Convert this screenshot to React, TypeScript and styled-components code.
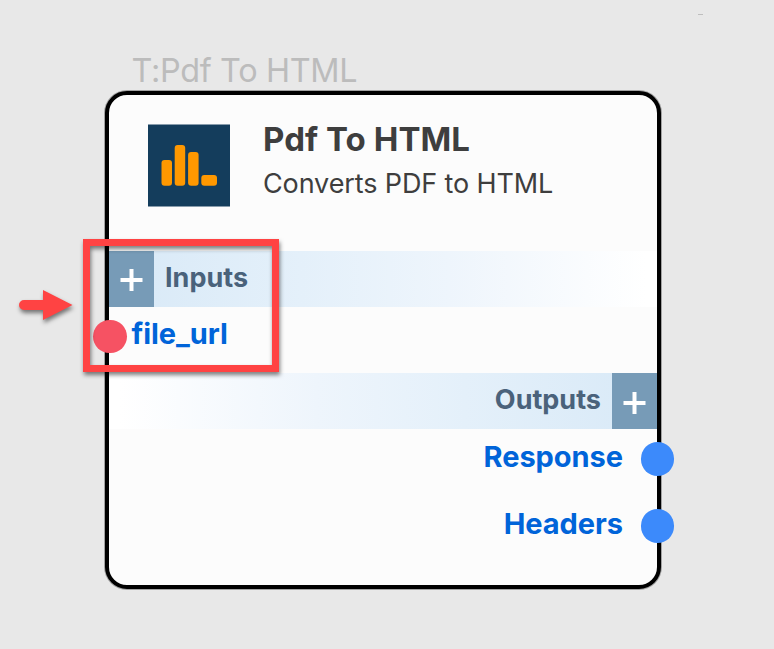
import React from "react";
import styled, { createGlobalStyle } from "styled-components";

const GlobalStyle = createGlobalStyle`
  * { box-sizing: border-box; }
  body { margin: 0; background: #e8e8e8; font-family: Inter, sans-serif; }
`;

const Canvas = styled.main`
  position: relative;
  width: 774px;
  height: 649px;
  padding: 51px 0 0 105px;
  overflow: hidden;
  background: #e8e8e8;
`;

const NodeLabel = styled.div`
  height: 40px;
  padding-left: 26.5px;
  font-size: 32.4px;
  letter-spacing: -0.33px;
  line-height: 40px;
  color: #bcbcbc;
  white-space: nowrap;
`;

const Card = styled.section`
  width: 556px;
  height: 498px;
  border: 4px solid #000;
  border-radius: 22px;
  background: #fcfcfc;
  box-shadow: 0 0 0 1px rgba(0, 0, 0, 0.3);
`;

const Header = styled.header`
  display: flex;
  height: 156px;
  padding: 29px 0 0 39px;
`;

const Icon = styled.svg`
  flex: none;
  width: 82px;
  height: 83px;
`;

const Heading = styled.div`
  margin-left: 33px;
  white-space: nowrap;
  color: #3e3e3e;
`;

const Title = styled.h1`
  margin: -5px 0 0;
  font-size: 33px;
  letter-spacing: 0.05px;
  line-height: 40px;
  font-weight: 700;
`;

const Subtitle = styled.p`
  margin: 8px 0 0;
  font-size: 27px;
  letter-spacing: -0.12px;
  line-height: 34px;
`;

const Band = styled.div<{ $side: "left" | "right" }>`
  display: flex;
  flex-direction: ${(p) => (p.$side === "left" ? "row" : "row-reverse")};
  height: 56px;
  background: linear-gradient(
    to ${(p) => (p.$side === "left" ? "right" : "left")},
    #d8e9f7,
    #e4f0fa 35%,
    #eef5fc 62%,
    #fff 98%
  );
`;

const AddButton = styled.button<{ $drop: number }>`
  display: flex;
  align-items: center;
  justify-content: center;
  width: 45px;
  height: 56px;
  padding: ${(p) => p.$drop}px 0 0;
  border: 0;
  background: #779bb7;
`;

const BandTitle = styled.span`
  padding: 0 11px;
  font-size: 27px;
  line-height: 54px;
  font-weight: 700;
  color: #4a627b;
`;

const Port = styled.div<{ $side: "left" | "right" }>`
  position: relative;
  height: 67px;
  padding: ${(p) => (p.$side === "left" ? "0 0 0 22.5px" : "0 34px 0 0")};
  text-align: ${(p) => p.$side};
  font-size: 29px;
  letter-spacing: -0.05px;
  line-height: ${(p) => (p.$side === "left" ? "54px" : "56px")};
  font-weight: 700;
  color: #0064d9;
`;

const InputPorts = styled.div`
  height: 66.4px;
`;

const Dot = styled.i<{ $side: "left" | "right" }>`
  position: absolute;
  top: 12.7px;
  ${(p) => (p.$side === "left" ? "left: -16px" : "right: -17.2px")};
  width: 33.6px;
  height: 33.6px;
  border-radius: 50%;
  background: ${(p) => (p.$side === "left" ? "#f65263" : "#3c8afb")};
`;

const Highlight = styled.div`
  position: absolute;
  left: 83px;
  top: 239px;
  width: 196px;
  height: 133px;
  border: 7px solid #ff4343;
  filter: drop-shadow(1px 3px 2px rgba(0, 0, 0, 0.5));
`;

const Arrow = styled.svg`
  position: absolute;
  left: 14px;
  top: 284px;
  overflow: visible;
  filter: drop-shadow(1px 3px 2px rgba(0, 0, 0, 0.5));
`;

const Tick = styled.div`
  position: absolute;
  left: 698px;
  top: 14px;
  width: 5px;
  height: 1px;
  background: #bebebe;
`;

const Plus = () => (
  <svg width="23" height="22" viewBox="0 0 23 22" stroke="#fff" strokeWidth="4">
    <path d="M.5 11H22.5M11.5 0V22" />
  </svg>
);

const inputs = ["file_url"];
const outputs = ["Response", "Headers"];

export default function App() {
  return (
    <>
      <GlobalStyle />
      <Canvas>
        <NodeLabel>T:Pdf To HTML</NodeLabel>
        <Card>
          <Header>
            <Icon viewBox="0 0 82 83">
              <rect y=".5" width="82" height="82" fill="#143d5c" />
              <g fill="#ff9800">
                <rect x="13.5" y="36" width="10.5" height="25.8" rx="3" />
                <rect x="26.7" y="21" width="10.5" height="40.8" rx="3" />
                <rect x="40.1" y="28" width="10.5" height="33.8" rx="3" />
                <rect x="53.3" y="51" width="15.7" height="10.8" rx="3" />
              </g>
            </Icon>
            <Heading>
              <Title>Pdf To HTML</Title>
              <Subtitle>Converts PDF to HTML</Subtitle>
            </Heading>
          </Header>
          <Band $side="left">
            <AddButton $drop={2} aria-label="Add input"><Plus /></AddButton>
            <BandTitle>Inputs</BandTitle>
          </Band>
          <InputPorts>
            {inputs.map((name) => (
              <Port key={name} $side="left">{name}<Dot $side="left" /></Port>
            ))}
          </InputPorts>
          <Band $side="right">
            <AddButton $drop={4} aria-label="Add output"><Plus /></AddButton>
            <BandTitle>Outputs</BandTitle>
          </Band>
          {outputs.map((name) => (
            <Port key={name} $side="right">{name}<Dot $side="right" /></Port>
          ))}
        </Card>
        <Highlight />
        <Arrow width="62" height="40" viewBox="0 0 62 40">
          <path d="M10 16H29V6L58.5 21L29 36V26H10A5 5 0 0 1 10 16Z" fill="#ff4343" />
        </Arrow>
        <Tick />
      </Canvas>
    </>
  );
}
